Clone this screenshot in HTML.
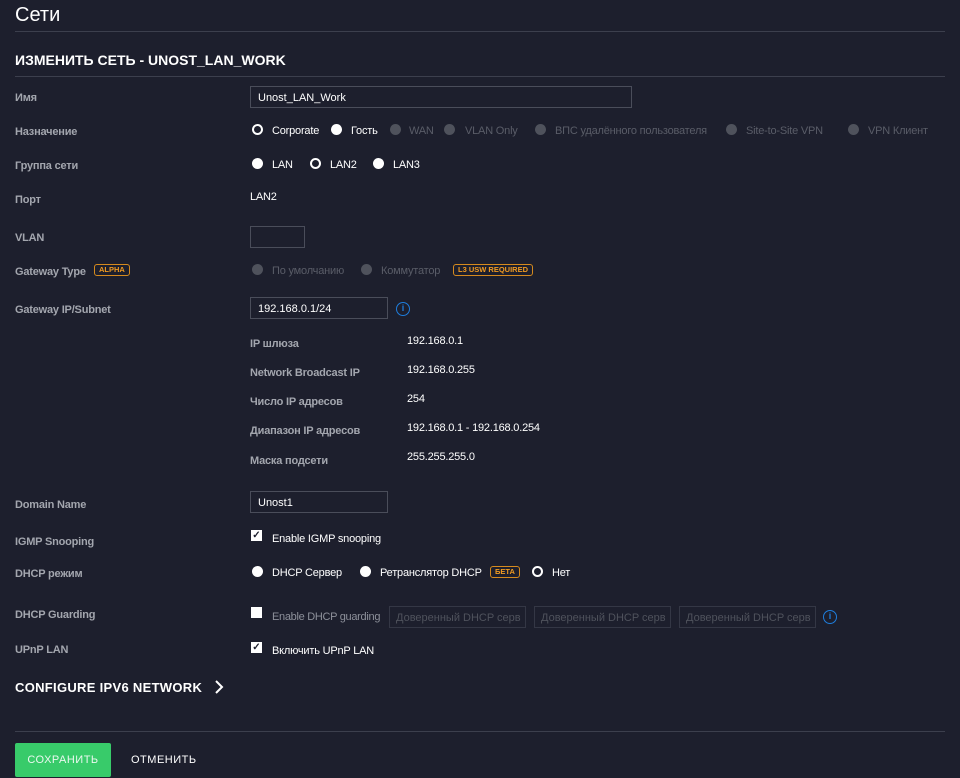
<!DOCTYPE html>
<html><head><meta charset="utf-8"><style>
body{margin:0;width:960px;height:778px;background:#1d1f2d;font-family:"Liberation Sans",sans-serif;color:#fff;position:relative;overflow:hidden}
.a{position:absolute;white-space:nowrap;line-height:1}
.l{color:#a3a6ae;font-size:11px;font-weight:bold;letter-spacing:-0.2px;margin-top:1px}
.v{font-size:11px;color:#fff;letter-spacing:-0.2px;margin-top:1px}
.d{color:#5a5d68;font-size:11px;letter-spacing:-0.2px;margin-top:1px}
.hr{position:absolute;left:15px;width:930px;height:1px;background:#3c3f4d}
.in{position:absolute;border:1px solid #4a4d5a;box-sizing:border-box;height:22px;font-size:11px;padding:5px 7px;color:#fff;white-space:nowrap}
.in.g{color:#4f525c;border-color:#343745;padding:5px 6px;overflow:hidden}
.r{position:absolute;width:11px;height:11px;border-radius:50%;background:#fff;box-sizing:border-box}
.r.s{background:#1d1f2d;border:2.5px solid #fff}
.r.x{background:#4f525c}
.cb{position:absolute;width:11px;height:11px;background:#fff;color:#1d1f2d;font-size:10px;line-height:11px;text-align:center;font-weight:bold}
.b{position:absolute;border:1px solid #d58a1e;border-radius:3px;color:#f09a21;font-size:7.5px;font-weight:bold;line-height:10px;padding:0 4px;box-sizing:border-box;height:12px}
.i{position:absolute;width:14px;height:14px;border:1.5px solid #1e7ddc;border-radius:50%;box-sizing:border-box;color:#1e7ddc;font-size:9px;font-weight:bold;text-align:center;line-height:11px}
</style></head><body>
<div class="a" style="left:15px;top:5px;font-size:20px">Сети</div>
<div class="hr" style="top:31px"></div>
<div class="a" style="left:15px;top:53px;font-size:14px;font-weight:bold;letter-spacing:0px">ИЗМЕНИТЬ СЕТЬ - UNOST_LAN_WORK</div>
<div class="hr" style="top:76px"></div>

<div class="a l" style="left:15px;top:92px">Имя</div>
<div class="in" style="left:250px;top:86px;width:382px">Unost_LAN_Work</div>

<div class="a l" style="left:15px;top:126px">Назначение</div>
<div class="r s" style="left:252px;top:124px"></div><div class="a v" style="left:272px;top:125px">Corporate</div>
<div class="r" style="left:331px;top:124px"></div><div class="a v" style="left:351px;top:125px">Гость</div>
<div class="r x" style="left:390px;top:124px"></div><div class="a d" style="left:409px;top:125px">WAN</div>
<div class="r x" style="left:444px;top:124px"></div><div class="a d" style="left:465px;top:125px">VLAN Only</div>
<div class="r x" style="left:535px;top:124px"></div><div class="a d" style="left:555px;top:125px">ВПС удалённого пользователя</div>
<div class="r x" style="left:726px;top:124px"></div><div class="a d" style="left:746px;top:125px">Site-to-Site VPN</div>
<div class="r x" style="left:848px;top:124px"></div><div class="a d" style="left:868px;top:125px">VPN Клиент</div>

<div class="a l" style="left:15px;top:160px">Группа сети</div>
<div class="r" style="left:252px;top:158px"></div><div class="a v" style="left:272px;top:159px">LAN</div>
<div class="r s" style="left:310px;top:158px"></div><div class="a v" style="left:330px;top:159px">LAN2</div>
<div class="r" style="left:373px;top:158px"></div><div class="a v" style="left:393px;top:159px">LAN3</div>

<div class="a l" style="left:15px;top:194px">Порт</div>
<div class="a v" style="left:250px;top:191px">LAN2</div>

<div class="a l" style="left:15px;top:232px">VLAN</div>
<div class="in" style="left:250px;top:226px;width:55px"></div>

<div class="a l" style="left:15px;top:266px">Gateway Type</div>
<div class="b" style="left:94px;top:264px">ALPHA</div>
<div class="r x" style="left:252px;top:264px"></div><div class="a d" style="left:272px;top:265px">По умолчанию</div>
<div class="r x" style="left:361px;top:264px"></div><div class="a d" style="left:381px;top:265px">Коммутатор</div>
<div class="b" style="left:453px;top:264px">L3 USW REQUIRED</div>

<div class="a l" style="left:15px;top:304px">Gateway IP/Subnet</div>
<div class="in" style="left:250px;top:297px;width:138px">192.168.0.1/24</div>
<div class="i" style="left:396px;top:302px">i</div>

<div class="a l" style="left:250px;top:338px">IP шлюза</div><div class="a v" style="left:407px;top:335px">192.168.0.1</div>
<div class="a l" style="left:250px;top:367px">Network Broadcast IP</div><div class="a v" style="left:407px;top:364px">192.168.0.255</div>
<div class="a l" style="left:250px;top:396px">Число IP адресов</div><div class="a v" style="left:407px;top:393px">254</div>
<div class="a l" style="left:250px;top:425px">Диапазон IP адресов</div><div class="a v" style="left:407px;top:422px">192.168.0.1 - 192.168.0.254</div>
<div class="a l" style="left:250px;top:455px">Маска подсети</div><div class="a v" style="left:407px;top:451px">255.255.255.0</div>

<div class="a l" style="left:15px;top:499px">Domain Name</div>
<div class="in" style="left:250px;top:491px;width:138px">Unost1</div>

<div class="a l" style="left:15px;top:536px">IGMP Snooping</div>
<div class="cb" style="left:251px;top:530px">✓</div><div class="a v" style="left:272px;top:533px">Enable IGMP snooping</div>

<div class="a l" style="left:15px;top:568px">DHCP режим</div>
<div class="r" style="left:252px;top:566px"></div><div class="a v" style="left:272px;top:567px">DHCP Сервер</div>
<div class="r" style="left:360px;top:566px"></div><div class="a v" style="left:380px;top:567px">Ретранслятор DHCP</div>
<div class="b" style="left:490px;top:566px">БЕТА</div>
<div class="r s" style="left:532px;top:566px"></div><div class="a v" style="left:552px;top:567px">Нет</div>

<div class="a l" style="left:15px;top:609px">DHCP Guarding</div>
<div class="cb" style="left:251px;top:607px"></div><div class="a" style="left:272px;top:612px;font-size:11px;color:#8d909a;letter-spacing:-0.3px">Enable DHCP guarding</div>
<div class="in g" style="left:389px;top:606px;width:137px">Доверенный DHCP серв</div>
<div class="in g" style="left:534px;top:606px;width:137px">Доверенный DHCP серв</div>
<div class="in g" style="left:679px;top:606px;width:137px">Доверенный DHCP серв</div>
<div class="i" style="left:823px;top:610px">i</div>

<div class="a l" style="left:15px;top:644px">UPnP LAN</div>
<div class="cb" style="left:251px;top:642px">✓</div><div class="a v" style="left:272px;top:645px">Включить UPnP LAN</div>

<div class="a" style="left:15px;top:681px;font-size:13px;font-weight:bold;letter-spacing:0.3px">CONFIGURE IPV6 NETWORK</div>
<svg class="a" style="left:214px;top:680px" width="10" height="14"><path d="M2 1 L8 7 L2 13" stroke="#fff" stroke-width="2" fill="none"/></svg>

<div class="hr" style="top:731px"></div>
<div class="a" style="left:15px;top:743px;width:96px;height:34px;background:#38cb6a;border-radius:2px;font-size:11px;line-height:34px;text-align:center;color:#eaf8ef;letter-spacing:0.5px">СОХРАНИТЬ</div>
<div class="a" style="left:131px;top:755px;font-size:11px;letter-spacing:0.5px">ОТМЕНИТЬ</div>
</body></html>
